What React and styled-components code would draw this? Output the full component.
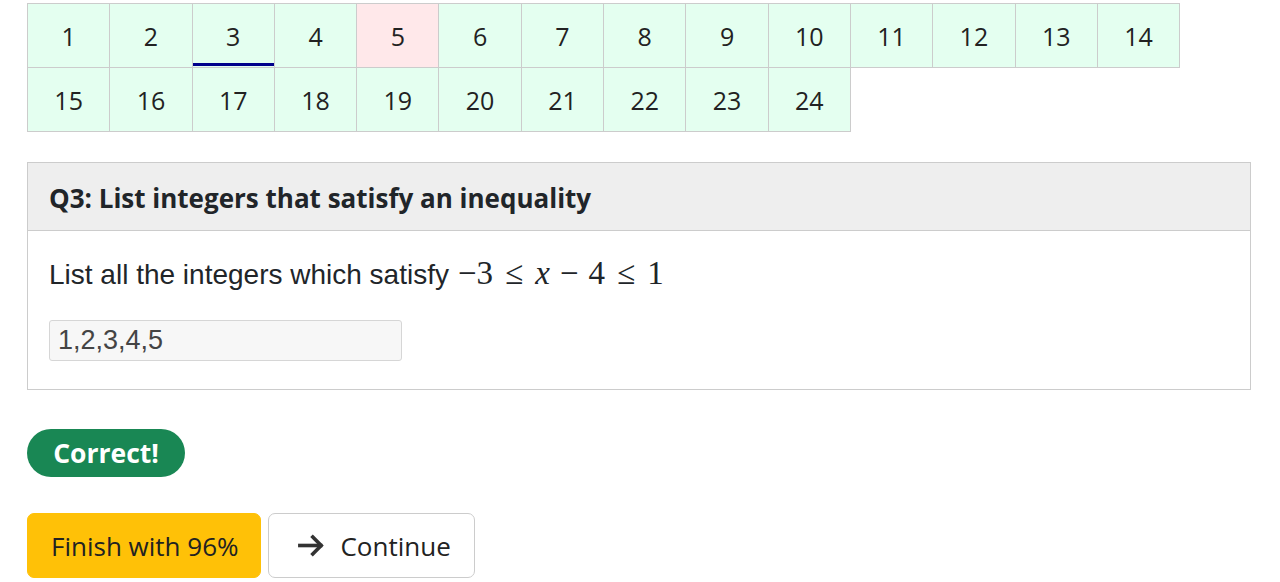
import React from "react";
import styled, { createGlobalStyle } from "styled-components";

const Global = createGlobalStyle`
  body {
    margin: 0;
    background: #fff;
    font-family: "Open Sans", "Noto Sans", sans-serif;
    color: #212529;
  }
`;

const Page = styled.div`
  padding: 3px 29px 0 27px;
`;

const Tiles = styled.div`
  display: flex;
  flex-wrap: wrap;
  padding-right: 1px;
  padding-bottom: 1px;
`;

const Tile = styled.div`
  box-sizing: border-box;
  width: 83.3px;
  height: 65px;
  margin-right: -1px;
  margin-bottom: -1px;
  border: 1px solid #cccccc;
  background: ${(p) => (p.$wrong ? "#ffe8ea" : "#e4fff0")};
  display: flex;
  align-items: center;
  justify-content: center;
  font-size: 25px;
  color: #222;
  position: relative;
  &::after {
    content: "";
    display: ${(p) => (p.$current ? "block" : "none")};
    position: absolute;
    left: 0;
    right: 0;
    bottom: 1px;
    height: 3px;
    background: #00008b;
  }
`;

const Card = styled.section`
  margin-top: 30px;
  border: 1px solid #cccccc;
`;

const CardHeader = styled.div`
  background: #eeeeee;
  border-bottom: 1px solid #cccccc;
  height: 68px;
  box-sizing: border-box;
  padding: 3px 21px 0;
  display: flex;
  align-items: center;
  font-size: 26px;
  font-weight: 700;
  color: #212529;
`;

const CardBody = styled.div`
  padding: 24px 21px 28px;
`;

const Prompt = styled.p`
  margin: 0;
  font-family: "Liberation Sans", Arial, sans-serif;
  font-size: 28px;
  color: #212529;
  display: flex;
  align-items: baseline;
  gap: 9px;
`;

const MathExpr = styled.span`
  font-family: "Liberation Serif", "DejaVu Serif", serif;
  font-size: 33px;
  display: inline-flex;
  align-items: baseline;
`;

const MathVar = styled.i`
  font-style: italic;
`;

const MathOp = styled.span`
  margin: 0 ${(p) => (p.$rel ? "12px" : "10px")};
`;

const Answer = styled.div`
  margin-top: 28px;
  width: 353px;
  height: 41px;
  box-sizing: border-box;
  border: 1px solid #d6d6d6;
  border-radius: 3px;
  background: #f7f7f7;
  font-family: "Liberation Sans", Arial, sans-serif;
  font-size: 27px;
  color: #444;
  display: flex;
  align-items: center;
  padding-left: 8px;
`;

const Badge = styled.div`
  margin-top: 39px;
  display: inline-flex;
  align-items: center;
  justify-content: center;
  width: 158px;
  height: 48px;
  border-radius: 24px;
  background: #198754;
  color: #fff;
  font-size: 26.5px;
  font-weight: 700;
`;

const Actions = styled.div`
  margin-top: 36px;
  display: flex;
  gap: 7px;
`;

const Button = styled.button`
  height: 65px;
  box-sizing: border-box;
  padding: ${(p) => (p.$primary ? "0 22px 0 23px" : "0 23px 0 27px")};
  border-radius: 7px;
  font-family: "Open Sans", "Noto Sans", sans-serif;
  font-size: 26px;
  display: flex;
  align-items: center;
  gap: 13px;
  cursor: pointer;
  color: #222;
  background: ${(p) => (p.$primary ? "#ffc107" : "#fff")};
  border: 1px solid ${(p) => (p.$primary ? "#ffc107" : "#cccccc")};
`;

const Arrow = () => (
  <svg width="31" height="31" viewBox="0 0 24 24" fill="none" stroke="#333" strokeWidth="2.8" strokeLinecap="square" strokeLinejoin="miter">
    <path d="M3 12h16" />
    <path d="M13 5.5l6.5 6.5-6.5 6.5" />
  </svg>
);

export default function App() {
  const nums = Array.from({ length: 24 }, (_, i) => i + 1);
  return (
    <>
      <Global />
      <Page>
        <Tiles>
          {nums.map((n) => (
            <Tile key={n} $current={n === 3} $wrong={n === 5}>
              {n}
            </Tile>
          ))}
        </Tiles>
        <Card>
          <CardHeader>Q3: List integers that satisfy an inequality</CardHeader>
          <CardBody>
            <Prompt>
              List all the integers which satisfy
              <MathExpr>
                −3<MathOp $rel>≤</MathOp><MathVar>x</MathVar><MathOp>−</MathOp>4<MathOp $rel>≤</MathOp>1
              </MathExpr>
            </Prompt>
            <Answer>1,2,3,4,5</Answer>
          </CardBody>
        </Card>
        <Badge>Correct!</Badge>
        <Actions>
          <Button $primary>Finish with 96%</Button>
          <Button>
            <Arrow />
            Continue
          </Button>
        </Actions>
      </Page>
    </>
  );
}
